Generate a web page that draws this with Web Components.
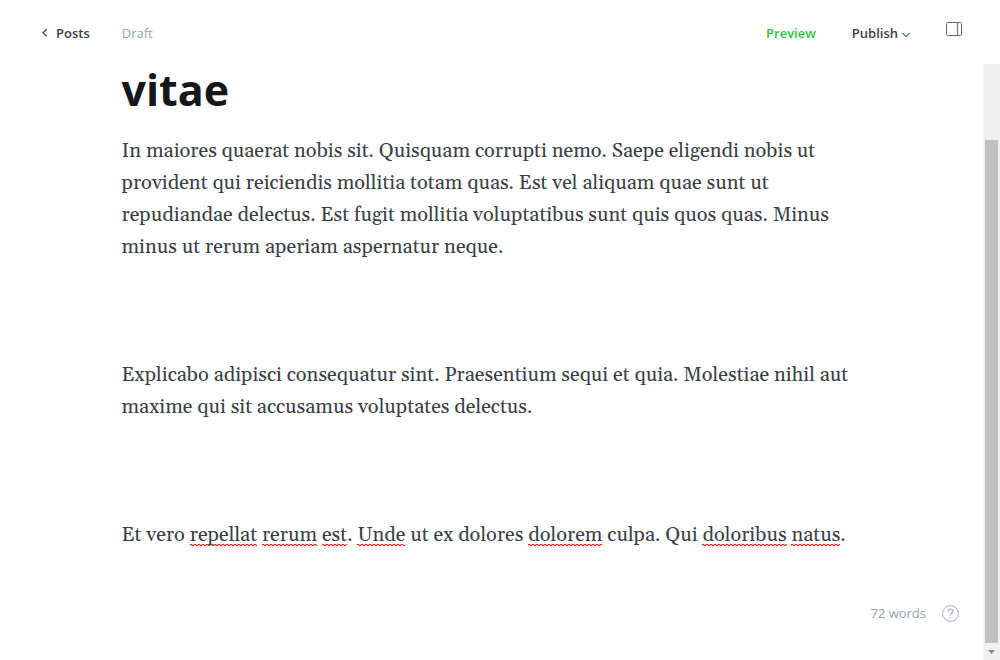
<!DOCTYPE html>
<html lang="la">
<head>
<meta charset="utf-8">
<meta name="viewport" content="width=device-width, initial-scale=1">
<title>vitae</title>
<style>
  body { margin: 0; background: #fff; font: 400 13px/20px "Open Sans", "Noto Sans", sans-serif; color: #394047; }
</style>
</head>
<body>
<post-editor>
  <editor-header slot="header" status="Draft"></editor-header>
  <post-title slot="content">vitae</post-title>
  <post-body slot="content">
    <p>In maiores quaerat nobis sit. Quisquam corrupti nemo. Saepe eligendi nobis ut<br>provident qui reiciendis mollitia totam quas. Est vel aliquam quae sunt ut<br>repudiandae delectus. Est fugit mollitia voluptatibus sunt quis quos quas. Minus<br>minus ut rerum aperiam aspernatur neque.</p>
    <p>Explicabo adipisci consequatur sint. Praesentium sequi et quia. Molestiae nihil aut<br>maxime qui sit accusamus voluptates delectus.</p>
    <p>Et vero <spell-mark>repellat</spell-mark> <spell-mark>rerum</spell-mark> <spell-mark>est</spell-mark>. <spell-mark>Unde</spell-mark> ut ex dolores <spell-mark>dolorem</spell-mark> culpa. Qui <spell-mark>doloribus</spell-mark> <spell-mark>natus</spell-mark>.</p>
  </post-body>
  <word-count slot="footer">72 words</word-count>
  <scroll-track slot="scroll"></scroll-track>
</post-editor>
<script>
function define(name, markup, setup) {
  const template = document.createElement('template');
  template.innerHTML = markup;
  customElements.define(name, class extends HTMLElement {
    constructor() {
      super();
      this.attachShadow({ mode: 'open' }).append(template.content.cloneNode(true));
    }
    connectedCallback() { if (setup) setup(this, this.shadowRoot); }
  });
}

define('post-editor', `
  <style>
    :host { display: flex; flex-direction: column; min-height: 100vh; }
    .workspace { flex: 1; display: flex; }
    .pane { flex: 1; min-width: 0; display: flex; flex-direction: column; }
    main { flex: 1; box-sizing: border-box; width: 100%; max-width: 780px; margin: 0 auto; padding: 0 20px; }
    footer { display: flex; justify-content: flex-end; padding: 0 24px 37px; }
  </style>
  <slot name="header"></slot>
  <div class="workspace">
    <div class="pane">
      <main><slot name="content"></slot></main>
      <footer><slot name="footer"></slot></footer>
    </div>
    <slot name="scroll"></slot>
  </div>`);

define('editor-header', `
  <style>
    :host { display: block; }
    header { display: flex; justify-content: space-between; box-sizing: border-box; height: 64px; padding: 0 38px 0 40px; }
    nav, .actions { display: flex; align-items: flex-start; padding-top: 23px; }
    nav { gap: 32px; }
    a, button { font: inherit; font-weight: 600; color: #394047; text-decoration: none; background: none; border: 0; padding: 0; display: flex; align-items: center; cursor: pointer; }
    a { gap: 6px; }
    .status { color: #8fa9b3; }
    .actions { gap: 36px; }
    .preview { color: #30bf48; }
    .publish { gap: 4px; }
    .publish svg { margin-top: 3px; }
    .sidebar { margin-top: -2px; }
    svg { display: block; fill: none; }
  </style>
  <header>
    <nav>
      <a href="#posts"><svg width="10" height="10" viewBox="0 0 10 10" stroke="#394047" stroke-width="1.2" aria-hidden="true"><path d="M6.800 1 3 4.700l3.800 3.700"/></svg>Posts</a>
      <span class="status"></span>
    </nav>
    <div class="actions">
      <button class="preview" type="button">Preview</button>
      <button class="publish" type="button">Publish<svg width="8" height="6" viewBox="0 0 8 6" stroke="#6b7580" stroke-width="1.400" aria-hidden="true"><path d="m.5 1 3.500 3.500L7.500 1"/></svg></button>
      <button class="sidebar" type="button" aria-label="Settings"><svg width="16" height="16" viewBox="0 0 16 16" stroke="#5d666f" aria-hidden="true"><rect x=".5" y="1.500" width="15" height="13" rx="1"/><path d="M11.500 1.500v13" stroke="#7d868f" stroke-width="1.400"/></svg></button>
    </div>
  </header>`, (host, root) => { root.querySelector('.status').textContent = host.getAttribute('status'); });

define('post-title', `
  <style>
    :host { display: block; }
    h1 { margin: 0 0 20px; font-size: 43px; line-height: 51px; font-weight: 700; color: #15171a; }
  </style>
  <h1><slot></slot></h1>`);

define('post-body', `
  <style>
    :host { display: block; font: 400 20px/32px Gelasio, Georgia, "Liberation Serif", serif; color: #394047; }
    ::slotted(p) { margin: 0 0 96px; }
    ::slotted(p:last-child) { margin-bottom: 0; }
  </style>
  <slot></slot>`);

define('spell-mark', `
  <style>
    :host {
      background:
        linear-gradient(90deg, #f22 50%, #fbb 50%) 0 calc(100% - 3px) / 4px 1px repeat-x,
        linear-gradient(90deg, #fbb 50%, #f22 50%) 0 calc(100% - 2px) / 4px 1px repeat-x;
    }
  </style>
  <slot></slot>`);

define('word-count', `
  <style>
    :host { display: flex; align-items: center; gap: 16px; color: #8fa3b3; }
    a { display: block; }
    svg { display: block; fill: none; stroke: #a3b0bf; }
  </style>
  <span><slot></slot></span>
  <a href="#help" aria-label="Help"><svg width="17" height="17" viewBox="0 0 17 17" aria-hidden="true"><circle cx="8.500" cy="8.500" r="7.900"/><path d="M6 6.600c0-1.600 1.100-2.600 2.500-2.600s2.600.9 2.600 2.400c0 1.900-2.600 1.700-2.600 3.700v.5M8.500 11.700v1.300" stroke-width="1.200"/></svg></a>`);

define('scroll-track', `
  <style>
    :host { box-sizing: border-box; width: 17px; display: flex; flex-direction: column; background: #f0f0f0; }
    .before { flex: 76; }
    .thumb { flex: 503; margin: 0 2px; background: #c1c1c1; }
    .down { height: 17px; display: grid; place-items: center; }
    svg { display: block; fill: #8b8b8b; }
  </style>
  <div class="before"></div>
  <div class="thumb"></div>
  <div class="down"><svg width="7" height="4" viewBox="0 0 7 4" aria-hidden="true"><path d="M0 0h7L3.500 4z"/></svg></div>`);
</script>
</body>
</html>
